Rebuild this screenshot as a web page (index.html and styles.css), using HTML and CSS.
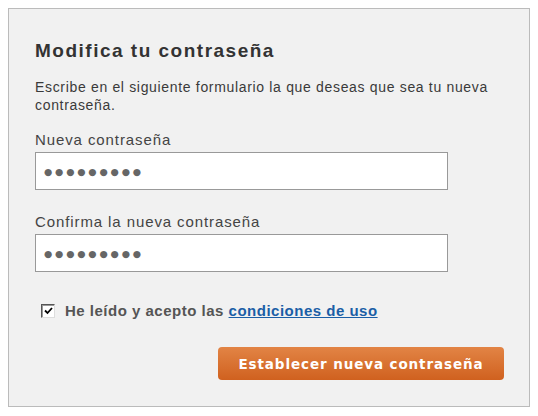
FILE: index.html
```html
<!DOCTYPE html>
<html lang="es">
<head>
<meta charset="utf-8">
<title>Modifica tu contraseña</title>
<link rel="stylesheet" href="styles.css">
</head>
<body>
<div class="panel">
  <h1 class="title">Modifica tu contraseña</h1>
  <p class="desc">Escribe en el siguiente formulario la que deseas que sea tu nueva contraseña.</p>
  <div class="field">
    <label class="label">Nueva contraseña</label>
    <div class="input"><span class="dots">●●●●●●●●●</span></div>
  </div>
  <div class="field">
    <label class="label">Confirma la nueva contraseña</label>
    <div class="input"><span class="dots">●●●●●●●●●</span></div>
  </div>
  <div class="check-row">
    <span class="checkbox"><svg width="9" height="8" viewBox="0 0 9 8"><path d="M1 3.5 L3.5 6 L8 1" fill="none" stroke="#000" stroke-width="1.8"/></svg></span>
    <span class="check-text">He leído y acepto las <a class="link" href="#">condiciones de uso</a></span>
  </div>
  <div class="actions">
    <button class="btn">Establecer nueva contraseña</button>
  </div>
</div>
</body>
</html>
```

FILE: styles.css
```css
body {
  margin: 8px;
  background: #fff;
  font-family: "Liberation Sans", Arial, sans-serif;
}
.panel {
  border: 1px solid #bbb;
  background: #f1f1f1;
  height: 397px;
  padding: 0 26px;
  box-sizing: content-box;
}
.title {
  margin: 0;
  padding-top: 27px;
  font-size: 19px;
  line-height: 30px;
  font-weight: bold;
  letter-spacing: 1.5px;
  color: #333;
}
.desc {
  margin: 12px 0 0;
  font-size: 14px;
  line-height: 18px;
  letter-spacing: 0.67px;
  color: #3a3a3a;
  width: 470px;
}
.field {
  margin-top: 17px;
}
.field + .field {
  margin-top: 23px;
}
.label {
  display: block;
  font-size: 15px;
  line-height: 18px;
  letter-spacing: 0.9px;
  color: #444;
}
.input {
  margin-top: 3px;
  width: 403px;
  height: 36px;
  border: 1px solid #999;
  background: #fff;
  display: flex;
  align-items: center;
  padding-left: 8px;
  box-sizing: content-box;
}
.dots {
  font-family: "DejaVu Sans", sans-serif;
  font-size: 9.5px;
  letter-spacing: 2.8px;
  color: #666;
}
.check-row {
  margin-top: 30px;
  display: flex;
  align-items: center;
  padding-left: 6px;
}
.checkbox {
  width: 12px;
  height: 12px;
  border: 1px solid #555;
  border-right-color: #ddd;
  border-bottom-color: #ddd;
  background: #fff;
  display: flex;
  align-items: center;
  justify-content: center;
  box-shadow: inset 1px 1px 0 #999;
}
.check-text {
  margin-left: 10px;
  font-size: 15px;
  letter-spacing: 0.5px;
  color: #555;
  font-weight: bold;
}
.link {
  color: #1a5ea6;
  text-decoration: underline;
}
.actions {
  margin-top: 28px;
  display: flex;
  justify-content: flex-end;
}
.btn {
  width: 286px;
  height: 33px;
  margin-right: -1px;
  border: none;
  border-radius: 4px;
  background: linear-gradient(#e28445, #d0611f);
  color: #fff;
  font-family: "DejaVu Sans", sans-serif;
  font-weight: bold;
  font-size: 13.5px;
  letter-spacing: 0.9px;
}
```
